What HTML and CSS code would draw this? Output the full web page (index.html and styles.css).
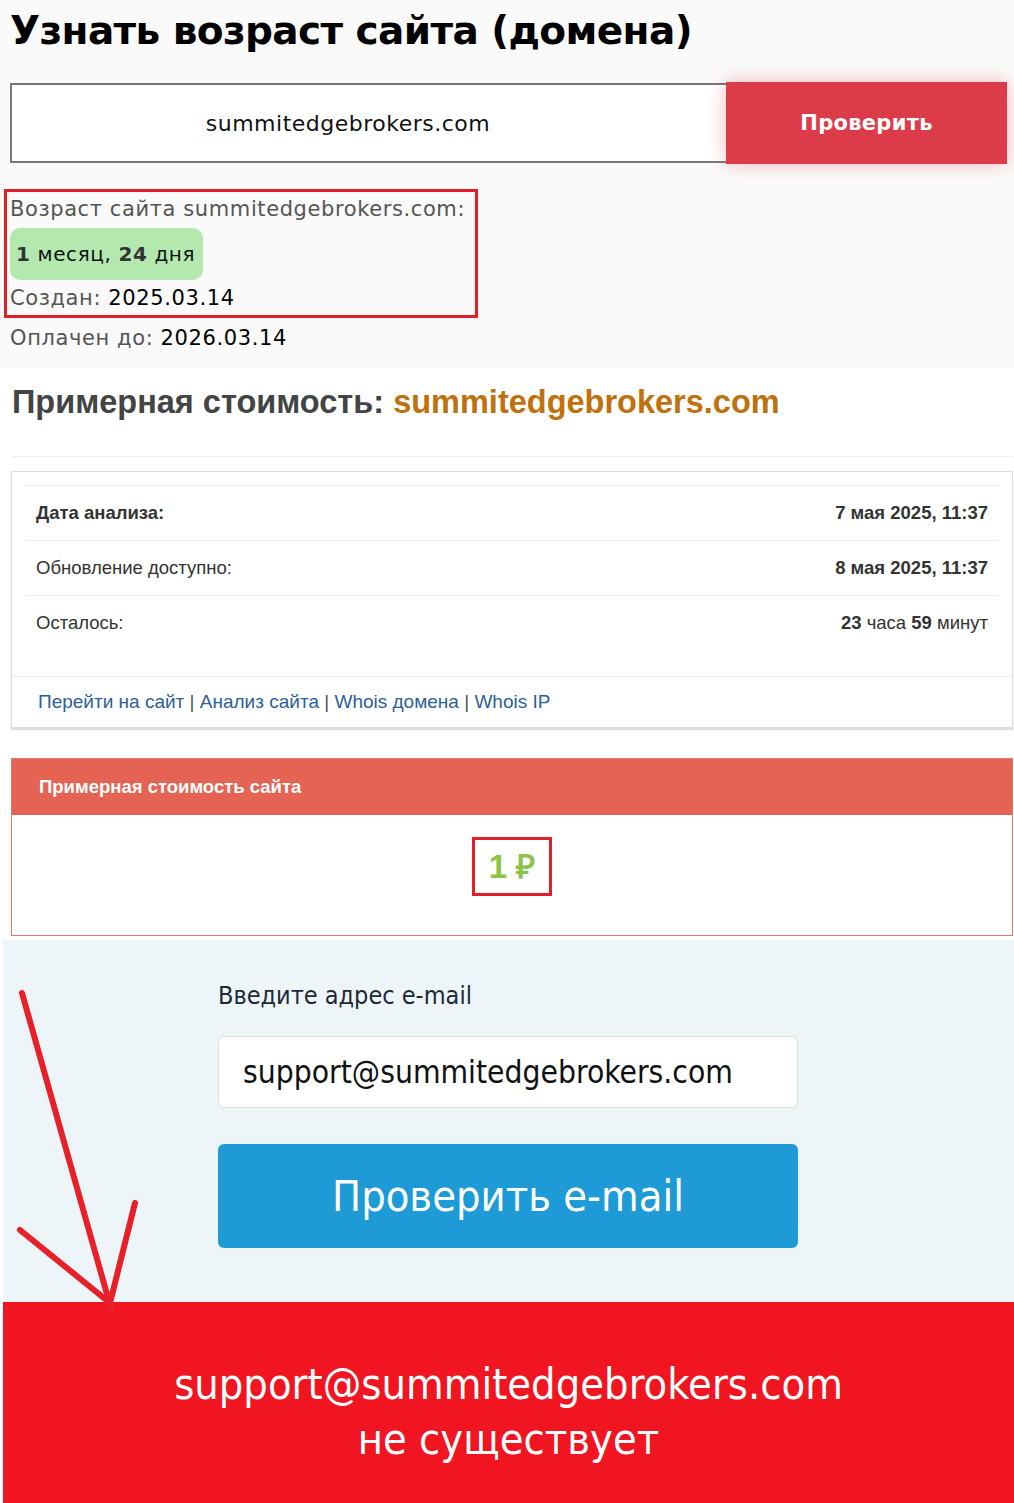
FILE: index.html
```html
<!DOCTYPE html>
<html lang="ru">
  <head>
    <meta charset="UTF-8" />
    <meta name="viewport" content="width=device-width, initial-scale=1.0" />
    <title>Узнать возраст сайта</title>
    <link rel="stylesheet" href="styles.css">
  </head>
  <body>
    <section class="age">
      <h1 class="age-title">Узнать возраст сайта (домена)</h1>
      <form class="age-form">
        <input class="age-input" type="text" value="summitedgebrokers.com" />
        <button class="age-button" type="button">Проверить</button>
      </form>
      <div class="age-result">
        <div class="age-line">Возраст сайта summitedgebrokers.com:</div>
        <div class="age-badge"><b>1</b> месяц, <b>24</b> дня</div>
        <div class="age-line">Создан: <span class="age-value">2025.03.14</span></div>
      </div>
      <div class="age-line age-paid">Оплачен до: <span class="age-value">2026.03.14</span></div>
    </section>

    <section class="cost">
      <h2 class="cost-title">Примерная стоимость: <span class="cost-domain">summitedgebrokers.com</span></h2>
      <hr class="cost-rule" />
      <div class="panel">
        <table class="info">
          <tr>
            <td><b>Дата анализа:</b></td>
            <td class="info-right"><b>7 мая 2025, 11:37</b></td>
          </tr>
          <tr>
            <td>Обновление доступно:</td>
            <td class="info-right"><b>8 мая 2025, 11:37</b></td>
          </tr>
          <tr>
            <td>Осталось:</td>
            <td class="info-right"><b>23</b> часа <b>59</b> минут</td>
          </tr>
        </table>
        <div class="panel-footer">
          <a href="#">Перейти на сайт</a> | <a href="#">Анализ сайта</a> | <a href="#">Whois домена</a> | <a href="#">Whois IP</a>
        </div>
      </div>
      <div class="price">
        <div class="price-head">Примерная стоимость сайта</div>
        <div class="price-body">
          <span class="price-value">1 ₽</span>
        </div>
      </div>
    </section>

    <section class="mail">
      <div class="mail-form">
        <label class="mail-label" for="email">Введите адрес e-mail</label>
        <input class="mail-input" id="email" type="text" value="support@summitedgebrokers.com" />
        <button class="mail-button" type="button">Проверить e-mail</button>
      </div>
      <svg class="arrow" width="160" height="340" viewBox="0 0 160 340">
        <path d="M22 53 L112 372 M20 290 L110 363 M135 263 L110 363" fill="none" stroke="#e8202a" stroke-width="6" stroke-linecap="round" />
      </svg>
    </section>

    <section class="verdict">
      <div>support@summitedgebrokers.com</div>
      <div>не существует</div>
    </section>
  </body>
</html>
```

FILE: styles.css
```css
body {
  margin: 0;
  font-family: "DejaVu Sans", sans-serif;
  background: #fff;
}

/* top block */
.age {
  background: #fafafa;
  padding: 6px 7px 13px 10px;
}
.age-title {
  margin: 0 0 27px;
  font-size: 39px;
  line-height: 50px;
  color: #000;
  letter-spacing: -0.6px;
}
.age-form {
  display: flex;
  margin-bottom: 25px;
}
.age-input {
  flex: 1;
  height: 80px;
  box-sizing: border-box;
  padding: 0 42px 0 0;
  border: 2px solid #777;
  border-right: none;
  background: #fff;
  font-family: "DejaVu Sans", sans-serif;
  font-size: 22px;
  letter-spacing: 0.5px;
  text-align: center;
  color: #111;
}
.age-button {
  width: 281px;
  height: 82px;
  margin-top: -1px;
  border: none;
  background: #dc3c4a;
  color: #fff;
  font-family: "DejaVu Sans", sans-serif;
  font-weight: bold;
  font-size: 21px;
  letter-spacing: 0.3px;
  box-shadow: 0 0 18px rgba(230, 60, 70, 0.35);
}
.age-result {
  display: inline-block;
  margin-left: -6px;
  padding: 1px 10px 0 3px;
  border: 3px solid #e0202a;
}
.age-line {
  font-size: 21px;
  letter-spacing: 0.6px;
  line-height: 33px;
  color: #555;
}
.age-value {
  color: #000;
}
.age-badge {
  display: inline-block;
  margin: 2px 0;
  padding: 0 8px 0 6px;
  line-height: 52px;
  border-radius: 10px;
  background: #b3e9ae;
  font-size: 20px;
  letter-spacing: 0.6px;
  color: #111;
}
.age-badge b {
  color: #333;
}
.age-paid {
  margin-top: 4px;
}

/* estimated cost */
.cost {
  padding: 16px 1px 4px 11px;
  font-family: "Liberation Sans", Arial, sans-serif;
}
.cost-title {
  margin: 0 0 0 1px;
  font-size: 32.5px;
  line-height: 36px;
  color: #444;
}
.cost-domain {
  color: #c0700c;
}
.cost-rule {
  margin: 36px 0 14px 1px;
  border: none;
  border-top: 1px solid #eee;
}
.panel {
  border: 1px solid #ddd;
  box-shadow: 0 2px 1px #ddd;
  background: #fff;
}
.info {
  width: calc(100% - 26px);
  margin: 13px 13px 0;
  border-collapse: collapse;
  font-size: 18.5px;
  color: #333;
}
.info td {
  height: 54px;
  padding: 0 11px;
  border-top: 1px solid #eee;
}
.info-right {
  text-align: right;
}
.panel-footer {
  margin-top: 26px;
  padding: 14px 26px 14px;
  border-top: 1px solid #eee;
  font-size: 19px;
  color: #555;
}
.panel-footer a {
  color: #2d5f9a;
  text-decoration: none;
}
.price {
  margin: 30px 0 0 0;
  border: 1px solid #e0786c;
}
.price-head {
  padding: 0 27px;
  line-height: 56px;
  background: #e56353;
  color: #fff;
  font-weight: bold;
  font-size: 18.5px;
}
.price-body {
  height: 120px;
  box-sizing: border-box;
  padding-top: 22px;
  display: flex;
  align-items: flex-start;
  justify-content: center;
  background: #fff;
}
.price-value {
  padding: 6px 14px;
  border: 3px solid #e0202a;
  color: #8bc34a;
  font-weight: bold;
  font-size: 33px;
  line-height: 41px;
}

/* e-mail check */
.mail {
  position: relative;
  margin-left: 3px;
  background: #eef5f9;
  padding: 39px 0 54px 215px;
  font-family: "DejaVu Sans Condensed", "DejaVu Sans", sans-serif;
}
.mail-form {
  width: 580px;
  display: flex;
  flex-direction: column;
}
.mail-label {
  font-size: 25px;
  line-height: 34px;
  color: #1d2a36;
  margin-bottom: 23px;
}
.mail-input {
  height: 72px;
  box-sizing: border-box;
  padding: 0 24px;
  border: 1px solid #ddd;
  border-radius: 6px;
  background: #fff;
  font-family: "DejaVu Sans Condensed", "DejaVu Sans", sans-serif;
  font-size: 31.5px;
  color: #111;
}
.mail-button {
  height: 104px;
  margin-top: 36px;
  border: none;
  border-radius: 6px;
  background: #1e9ad6;
  color: #fff;
  font-family: "DejaVu Sans Condensed", "DejaVu Sans", sans-serif;
  font-size: 43px;
}
.arrow {
  position: absolute;
  left: -3px;
  top: 0;
  overflow: visible;
}

/* result */
.verdict {
  margin-left: 3px;
  height: 201px;
  box-sizing: border-box;
  padding-top: 55px;
  background: #f01520;
  color: #fff;
  text-align: center;
  font-family: "DejaVu Sans Condensed", "DejaVu Sans", sans-serif;
  font-size: 43px;
  line-height: 55px;
}
```
